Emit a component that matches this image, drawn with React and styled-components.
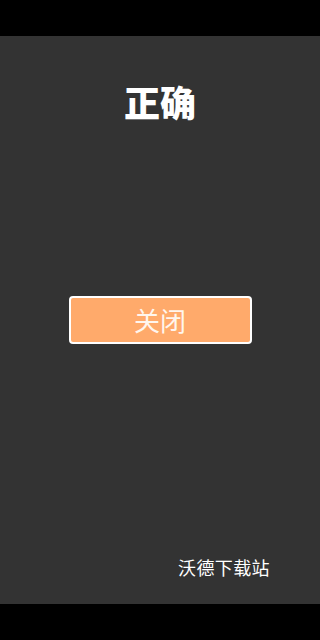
import React from 'react'
import styled, { createGlobalStyle } from 'styled-components'

const Global = createGlobalStyle`
  html, body { margin: 0; padding: 0; background: #000; }
  body { font-family: "Noto Sans CJK SC", "Noto Sans", sans-serif; }
`

const Screen = styled.div`
  width: 320px;
  height: 640px;
  display: flex;
  flex-direction: column;
  background: #000;
`

const Bar = styled.div`
  height: 36px;
  flex-shrink: 0;
  background: #000;
`

const Main = styled.div`
  flex: 1;
  background: #333333;
  display: flex;
  flex-direction: column;
  align-items: center;
  padding: 47px 0 28px;
`

const Title = styled.h1`
  margin: 0;
  font-size: 36px;
  line-height: 36px;
  font-weight: 900;
  color: #fff;
`

const CloseButton = styled.button`
  margin-top: 177px;
  width: 183px;
  height: 48px;
  box-sizing: border-box;
  border: 2px solid #fff;
  border-radius: 4px;
  background: #ffaa6b;
  color: #fff6ee;
  font-family: inherit;
  font-size: 26px;
  line-height: 1;
  padding: 0;
  display: flex;
  align-items: center;
  justify-content: center;
`

const Footer = styled.div`
  margin-top: auto;
  align-self: flex-end;
  margin-right: 50px;
  font-size: 18px;
  line-height: 18px;
  letter-spacing: 0.4px;
  font-weight: 400;
  color: #fff;
`

export default function App() {
  return (
    <Screen>
      <Global />
      <Bar />
      <Main>
        <Title>正确</Title>
        <CloseButton>关闭</CloseButton>
        <Footer>沃德下载站</Footer>
      </Main>
      <Bar />
    </Screen>
  )
}
